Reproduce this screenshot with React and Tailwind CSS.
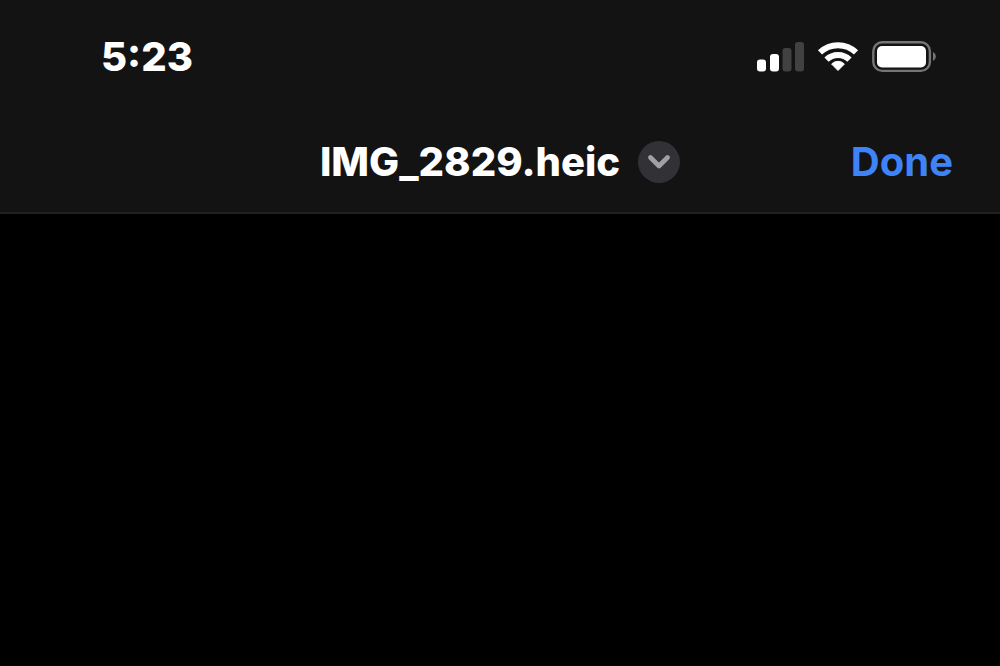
import React from 'react';

function SignalIcon() {
  return (
    <svg width="47" height="30" viewBox="0 0 47 30" aria-label="Cellular signal">
      <rect x="0" y="17.5" width="9" height="12" rx="3" fill="#fff" />
      <rect x="13" y="12" width="9" height="17.5" rx="3" fill="#fff" />
      <rect x="25.5" y="6" width="9" height="23.5" rx="3" fill="#414141" />
      <rect x="38" y="0" width="9" height="29.5" rx="3" fill="#414141" />
    </svg>
  );
}

function WifiIcon() {
  return (
    <svg width="42" height="30" viewBox="0 0 42 30" fill="none" aria-label="Wi-Fi">
      <path d="M3 10.4 A26 26 0 0 1 39 10.4" stroke="#fff" strokeWidth="6" />
      <path d="M9.5 17.6 A16.5 16.5 0 0 1 32.5 17.6" stroke="#fff" strokeWidth="6" />
      <path d="M21 28.5 L14.6 22 A9 9 0 0 1 27.4 22 Z" fill="#fff" stroke="#fff" strokeLinejoin="round" />
    </svg>
  );
}

function BatteryIcon() {
  return (
    <svg width="64" height="32" viewBox="0 0 64 32" fill="none" aria-label="Battery">
      <rect x="1.3" y="1.3" width="56.6" height="28.6" rx="9" stroke="#757575" strokeWidth="2.4" />
      <rect x="5" y="5" width="49" height="21.5" rx="5" fill="#fff" />
      <path d="M61 11 A5 5 0 0 1 61 20 Z" fill="#757575" />
    </svg>
  );
}

export default function App() {
  return (
    <div className="min-h-screen bg-black font-['Inter',sans-serif] font-bold text-white">
      <header className="border-b-2 border-[#202020] bg-[#131313]">
        {/* Status bar */}
        <div className="flex h-28 items-center justify-between pt-0.5 pl-[101px] pr-16">
          <time className="text-[40px] leading-none font-extrabold">5:23</time>
          <div className="flex items-center gap-[13px]">
            <SignalIcon />
            <WifiIcon />
            <BatteryIcon />
          </div>
        </div>

        {/* Navigation bar */}
        <div className="grid h-[100px] grid-cols-[1fr_auto_1fr] items-center px-[47px]">
          <button type="button" className="col-start-2 flex items-center gap-[18px] text-[40px] leading-none font-extrabold">
            <span>IMG_2829.heic</span>
            <span className="flex size-[42px] items-center justify-center rounded-full bg-[#323236]">
              <svg width="22" height="14" viewBox="0 0 22 14" fill="none">
                <path d="M2.5 2.5 L11 11 L19.5 2.5" stroke="#a0a0a5" strokeWidth="4.6" strokeLinecap="round" strokeLinejoin="round" />
              </svg>
            </span>
          </button>
          <button type="button" className="justify-self-end text-[40px] leading-none text-[#3e83f7]">Done</button>
        </div>
      </header>
      <main />
    </div>
  );
}
